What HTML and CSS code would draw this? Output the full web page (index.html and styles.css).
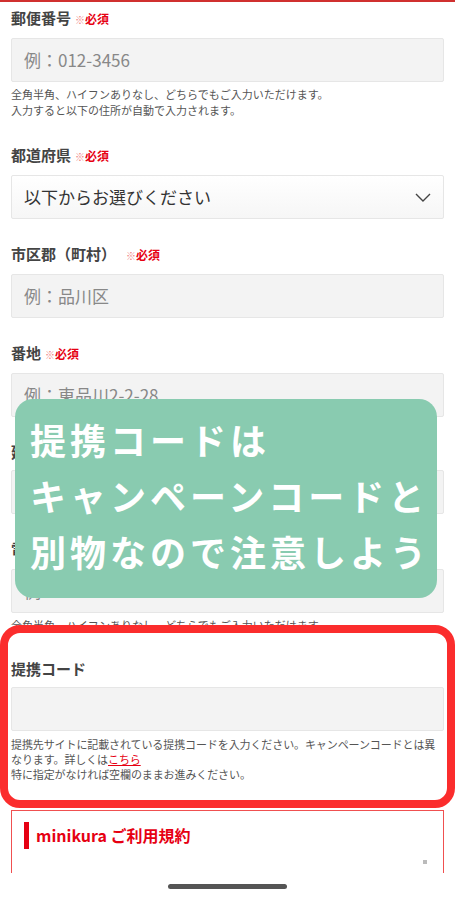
FILE: index.html
```html
<!DOCTYPE html>
<html lang="ja">
<head>
    <meta charset="UTF-8">
    <meta name="viewport" content="width=device-width, initial-scale=1.0">
    <title>お届け先情報</title>
    <link rel="stylesheet" href="styles.css">
</head>
<body>

    <div id="page">
        <form class="form">
            <div class="field">
                <div class="label">郵便番号<span class="req"><i>※</i>必須</span></div>
                <div class="input placeholder">例：012-3456</div>
                <p class="note first">全角半角、ハイフンありなし、どちらでもご入力いただけます。<br>入力すると以下の住所が自動で入力されます。</p>
            </div>

            <div class="field">
                <div class="label">都道府県<span class="req"><i>※</i>必須</span></div>
                <div class="input select">
                    <span>以下からお選びください</span>
                    <svg width="16" height="9" viewBox="0 0 16 9"><path d="M1 1l7 7 7-7" fill="none" stroke="#444" stroke-width="1.4"/></svg>
                </div>
            </div>

            <div class="field">
                <div class="label">市区郡（町村）<span class="req wide"><i>※</i>必須</span></div>
                <div class="input placeholder">例：品川区</div>
            </div>

            <div class="field">
                <div class="label">番地<span class="req"><i>※</i>必須</span></div>
                <div class="input placeholder">例：東品川2-2-28</div>
            </div>

            <div class="field">
                <div class="label">建物名</div>
                <div class="input placeholder">例：ミニクラビル101</div>
            </div>

            <div class="field">
                <div class="label">電話番号<span class="req"><i>※</i>必須</span></div>
                <div class="input placeholder">例：03-1234-5678</div>
                <p class="note">全角半角、ハイフンありなし、どちらでもご入力いただけます。</p>
            </div>

            <div class="field highlight">
                <div class="label">提携コード</div>
                <div class="input"></div>
                <p class="note long">提携先サイトに記載されている提携コードを入力ください。キャンペーンコードとは異なります。詳しくは<a href="#">こちら</a><br>特に指定がなければ空欄のままお進みください。</p>
            </div>

            <div class="terms">
                <h2 class="terms-title">minikura ご利用規約</h2>
                <span class="scroll-dot"></span>
            </div>
        </form>

        <div class="callout">提携コードは<br>キャンペーンコードと<br>別物なので注意しよう</div>
    </div>

    <div class="home-bar"><span></span></div>

</body>
</html>
```

FILE: styles.css
```css
body {
    font-family: 'Noto Sans CJK JP', 'Noto Sans', sans-serif;
    margin: 0;
    background-color: #fff;
    color: #333;
}

#page {
    position: relative;
    border-top: 2px solid #d0302f;
}

.form {
    padding: 6px 11px 0;
}

.field {
    margin-bottom: 25px;
}

.label {
    font-size: 15px;
    line-height: 20px;
    font-weight: bold;
    color: #444;
    margin-bottom: 8px;
}

.req {
    font-size: 12px;
    color: #e60012;
    margin-left: 4px;
}

.req i {
    font-style: normal;
    font-weight: normal;
    font-size: 10px;
    color: #f08080;
}

.req.wide {
    margin-left: 10px;
}

.input {
    box-sizing: border-box;
    height: 44px;
    padding: 0 12px;
    background-color: #f3f3f3;
    border: 1px solid #e6e6e6;
    border-radius: 2px;
    font-size: 17px;
    line-height: 42px;
}

.placeholder {
    color: #888;
}

.select {
    display: flex;
    justify-content: space-between;
    align-items: center;
    background: linear-gradient(#fff, #f6f6f6);
    color: #333;
    padding-right: 12px;
}

.note {
    margin: 4px 0 0;
    font-size: 11px;
    line-height: 16px;
    color: #555;
}

.note.first {
    padding-bottom: 2px;
}

.highlight {
    position: relative;
    margin: -33px -11px 2px;
    padding: 26px 3px 18px;
    border: 8px solid #fb2d2d;
    border-radius: 20px;
    background-color: #fff;
}

.note.long {
    margin-top: 6px;
    line-height: 15px;
    letter-spacing: -0.1px;
}

.note a {
    color: #e60012;
}

.terms {
    position: relative;
    height: 90px;
    border: 1px solid #f05050;
    border-bottom: none;
    padding: 11px 12px 0;
}

.terms-title {
    margin: 0;
    padding-left: 7px;
    border-left: 5px solid #e60012;
    font-size: 16px;
    line-height: 27px;
    color: #e60012;
}

.scroll-dot {
    position: absolute;
    right: 16px;
    top: 49px;
    width: 4px;
    height: 4px;
    background-color: #bbb;
}

.callout {
    position: absolute;
    left: 15px;
    top: 397px;
    width: 422px;
    height: 199px;
    box-sizing: border-box;
    padding: 12px 0 0 15px;
    background-color: #89cbb0;
    border-radius: 18px;
    color: #fff;
    font-size: 36px;
    font-weight: bold;
    line-height: 56px;
    letter-spacing: 4px;
    white-space: nowrap;
}

.home-bar {
    position: fixed;
    left: 0;
    right: 0;
    bottom: 0;
    height: 27px;
    background-color: #fff;
    display: flex;
    justify-content: center;
    padding-top: 11px;
    box-sizing: border-box;
}

.home-bar span {
    width: 119px;
    height: 5px;
    border-radius: 3px;
    background-color: #555;
}
```
